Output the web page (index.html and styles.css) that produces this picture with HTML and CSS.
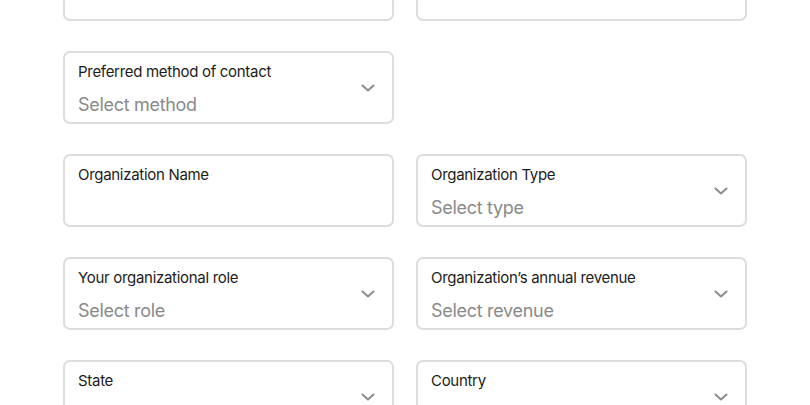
FILE: index.html
```html
<!DOCTYPE html>
<html lang="en">
<head>
<meta charset="utf-8">
<title>Contact details</title>
<link rel="stylesheet" href="styles.css">
</head>
<body>
<form class="form">
  <div class="field"></div>
  <div class="field"></div>

  <div class="field field--select">
    <div class="field-body">
      <span class="field-label">Preferred method of contact</span>
      <span class="field-value">Select method</span>
    </div>
    <svg class="chevron" viewBox="0 0 14 8" aria-hidden="true"><path d="M1.5 1.5 L7 6.5 L12.5 1.5"/></svg>
  </div>
  <div class="cell-empty"></div>

  <div class="field">
    <div class="field-body">
      <span class="field-label">Organization Name</span>
    </div>
  </div>
  <div class="field field--select">
    <div class="field-body">
      <span class="field-label">Organization Type</span>
      <span class="field-value">Select type</span>
    </div>
    <svg class="chevron" viewBox="0 0 14 8" aria-hidden="true"><path d="M1.5 1.5 L7 6.5 L12.5 1.5"/></svg>
  </div>

  <div class="field field--select">
    <div class="field-body">
      <span class="field-label">Your organizational role</span>
      <span class="field-value">Select role</span>
    </div>
    <svg class="chevron" viewBox="0 0 14 8" aria-hidden="true"><path d="M1.5 1.5 L7 6.5 L12.5 1.5"/></svg>
  </div>
  <div class="field field--select">
    <div class="field-body">
      <span class="field-label">Organization’s annual revenue</span>
      <span class="field-value">Select revenue</span>
    </div>
    <svg class="chevron" viewBox="0 0 14 8" aria-hidden="true"><path d="M1.5 1.5 L7 6.5 L12.5 1.5"/></svg>
  </div>

  <div class="field field--select">
    <div class="field-body">
      <span class="field-label">State</span>
    </div>
    <svg class="chevron" viewBox="0 0 14 8" aria-hidden="true"><path d="M1.5 1.5 L7 6.5 L12.5 1.5"/></svg>
  </div>
  <div class="field field--select">
    <div class="field-body">
      <span class="field-label">Country</span>
    </div>
    <svg class="chevron" viewBox="0 0 14 8" aria-hidden="true"><path d="M1.5 1.5 L7 6.5 L12.5 1.5"/></svg>
  </div>
</form>
</body>
</html>
```
FILE: styles.css
```css
html, body {
  margin: 0;
  padding: 0;
  background: #ffffff;
  overflow: hidden;
  height: 100%;
}

body {
  font-family: Inter, "Noto Sans", "Liberation Sans", sans-serif;
  color: #1c1c1c;
}

.form {
  display: grid;
  grid-template-columns: 331px 331px;
  column-gap: 22px;
  row-gap: 30px;
  padding-left: 63px;
  margin-top: -52px;
}

.field {
  box-sizing: border-box;
  height: 73px;
  border: 2px solid #dddddd;
  border-radius: 7px;
  display: flex;
  align-items: center;
  padding: 0 17px 0 13px;
  background: #ffffff;
}

.field-body {
  flex: 1;
  align-self: stretch;
  display: flex;
  flex-direction: column;
  padding-top: 10px;
}

.field-label {
  font-size: 15px;
  line-height: 18px;
  letter-spacing: -0.3px;
  color: #1c1c1c;
}

.field-value {
  margin-top: 12px;
  font-size: 18px;
  line-height: 24px;
  letter-spacing: -0.3px;
  color: #8a8a8a;
}

.chevron {
  width: 14px;
  height: 8px;
  fill: none;
  stroke: #8c8c8c;
  stroke-width: 2;
  stroke-linecap: round;
  stroke-linejoin: round;
}
```
